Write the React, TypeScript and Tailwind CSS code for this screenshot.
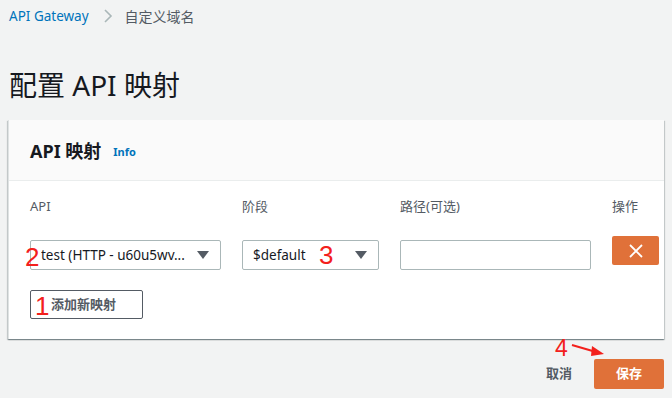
import React from 'react';

const font = { fontFamily: '"Noto Sans", "Noto Sans CJK SC", sans-serif' };

const Caret: React.FC = () => (
  <svg width="12" height="8" viewBox="0 0 12 8" className="shrink-0">
    <path d="M0 0 L12 0 L6 8 Z" fill="#545b64" />
  </svg>
);

const Mark: React.FC<{ n: string; className: string }> = ({ n, className }) => (
  <span
    className={`absolute text-[#f3201c] font-light leading-none pointer-events-none ${className}`}
    style={{ fontFamily: '"Liberation Sans", sans-serif' }}
  >
    {n}
  </span>
);

const App: React.FC = () => {
  return (
    <div className="relative w-[672px] h-[398px] overflow-hidden bg-[#f2f3f3] px-[8px]" style={font}>
      {/* Breadcrumb */}
      <div className="flex items-center h-[32px] pl-[1px] text-[13.5px]">
        <span className="text-[#0073bb]">API Gateway</span>
        <svg width="10" height="14" viewBox="0 0 10 14" className="ml-[14px] mr-[12px]">
          <path d="M2 1 L8 7 L2 13" stroke="#aab7b8" strokeWidth="1.6" fill="none" />
        </svg>
        <span className="text-[#545b64] text-[14px]">自定义域名</span>
      </div>

      {/* Title */}
      <h1 className="mt-[36px] h-[34px] flex items-center pl-[1px] text-[28px] text-[#16191f] leading-none">
        配置 API 映射
      </h1>

      {/* Card */}
      <div className="mt-[18px] w-[656px] bg-white border-l border-[#dfe3e3] shadow-[0_1px_1px_0_rgba(0,28,36,0.3),1px_1px_1px_0_rgba(0,28,36,0.15),-1px_1px_1px_0_rgba(0,28,36,0.15)]">
        <div className="h-[61px] bg-[#fafafa] border-b border-[#eaeded] flex items-center pl-[21px]">
          <span className="text-[18px] font-bold text-[#16191f] mt-[2px]">API 映射</span>
          <span className="ml-[12px] text-[11px] font-bold text-[#0073bb] mt-[4px]">Info</span>
        </div>

        <div className="pl-[21px] pt-[16px] pb-[20px] text-[13px] text-[#545b64]">
          <div className="flex gap-[21px] h-[20px] items-center">
            <span className="w-[191px]">API</span>
            <span className="w-[137px]">阶段</span>
            <span className="w-[191px]">路径(可选)</span>
            <span className="w-[47px]">操作</span>
          </div>

          <div className="relative flex gap-[21px] mt-[19px] items-start">
            <div className="mt-[4px] w-[191px] h-[30px] border border-[#aab7b8] rounded-[2px] flex items-center pl-[10px] pr-[11px] text-[#16191f] text-[13.5px]">
              <span className="flex-1 truncate">test (HTTP - u60u5wv...</span>
              <Caret />
            </div>
            <div className="mt-[4px] w-[137px] h-[30px] border border-[#aab7b8] rounded-[2px] flex items-center pl-[10px] pr-[11px] text-[#16191f] text-[13.5px]">
              <span className="flex-1">$default</span>
              <Caret />
            </div>
            <div className="mt-[4px] w-[191px] h-[30px] border border-[#aab7b8] rounded-[2px] bg-white" />
            <button className="w-[47px] h-[29px] bg-[#e07139] rounded-[2px] flex items-center justify-center">
              <svg width="14" height="14" viewBox="0 0 14 14">
                <path d="M1 1 L13 13 M13 1 L1 13" stroke="white" strokeWidth="1.8" />
              </svg>
            </button>
            <Mark n="2" className="left-[-5px] top-[8px] text-[26px]" />
            <Mark n="3" className="left-[289px] top-[6px] text-[26px]" />
          </div>

          <div className="relative mt-[20px]">
            <button className="w-[113px] h-[29px] border border-[#545b64] rounded-[2px] text-[13px] font-bold text-[#545b64] pl-[20px] text-left">
              添加新映射
            </button>
            <Mark n="1" className="left-[5px] top-[3px] text-[26px]" />
          </div>
        </div>
      </div>

      {/* Footer */}
      <div className="relative flex justify-end items-center mt-[20px] w-[656px]">
        <span className="text-[13px] font-bold text-[#545b64] mr-[22px]">取消</span>
        <button className="w-[70px] h-[30px] bg-[#e07139] rounded-[2px] text-white text-[13px] font-bold">
          保存
        </button>
        <Mark n="4" className="left-[547px] top-[-22px] text-[23px]" />
        <svg width="40" height="16" viewBox="0 0 40 16" className="absolute left-[562px] top-[-16px]">
          <path d="M2 2 L26 9" stroke="#f3201c" strokeWidth="2" />
          <path d="M22 3 L34 11 L21 13 Z" fill="#f3201c" />
        </svg>
      </div>
    </div>
  );
};

export default App;
